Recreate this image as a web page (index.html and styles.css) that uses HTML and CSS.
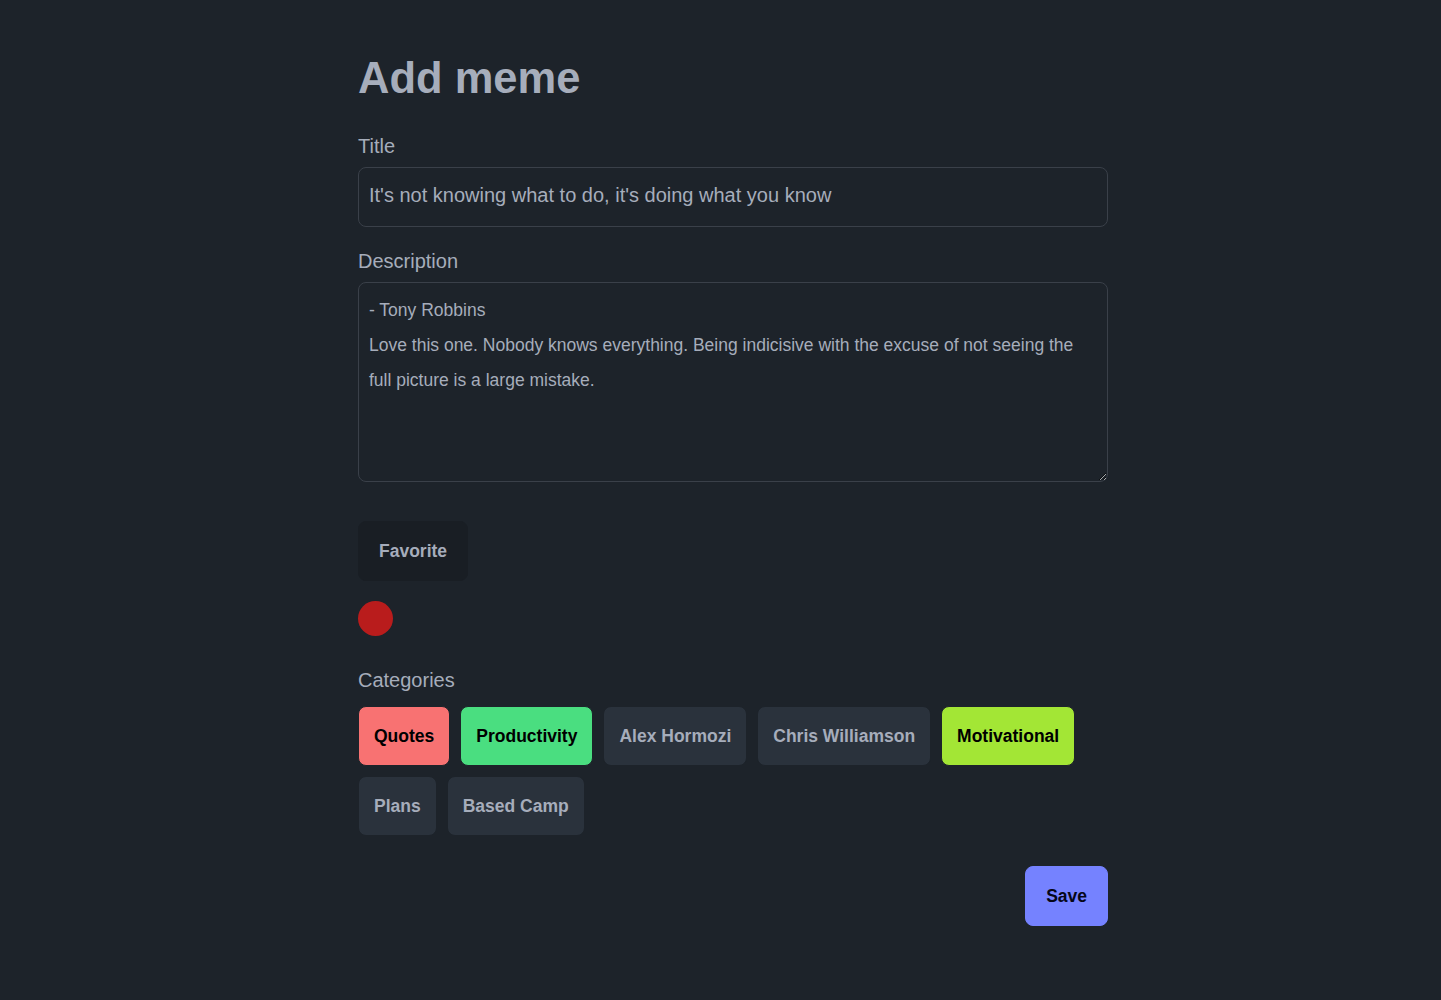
FILE: index.html
```html
<!DOCTYPE html>
<html lang="en">
<head>
<meta charset="utf-8">
<title>Add meme</title>
<link rel="stylesheet" href="styles.css">
</head>
<body>
<main class="page">
  <form class="form">
    <h1 class="heading">Add meme</h1>

    <label class="label label-title" for="title">Title</label>
    <input id="title" class="input" type="text" value="It's not knowing what to do, it's doing what you know">

    <label class="label label-desc" for="desc">Description</label>
    <textarea id="desc" class="textarea">- Tony Robbins
Love this one. Nobody knows everything. Being indicisive with the excuse of not seeing the full picture is a large mistake.</textarea>

    <button type="button" class="btn btn-fav">Favorite</button>
    <span class="dot"></span>

    <div class="label label-cat">Categories</div>
    <div class="cats">
      <button type="button" class="btn cat cat-red">Quotes</button>
      <button type="button" class="btn cat cat-green">Productivity</button>
      <button type="button" class="btn cat">Alex Hormozi</button>
      <button type="button" class="btn cat">Chris Williamson</button>
      <button type="button" class="btn cat cat-lime">Motivational</button>
      <button type="button" class="btn cat">Plans</button>
      <button type="button" class="btn cat">Based Camp</button>
    </div>

    <div class="actions">
      <button type="button" class="btn btn-save">Save</button>
    </div>
  </form>
</main>
</body>
</html>
```

FILE: styles.css
```css
* { box-sizing: border-box; }

html, body {
  margin: 0;
  padding: 0;
  background: #1d232a;
  color: #a6adbb;
  font-family: "Liberation Sans", Arial, sans-serif;
}

.page {
  width: 775px;
  margin: 0 auto;
  padding: 54px 0 40px 25px;
}

.form {
  width: 750px;
  display: flex;
  flex-direction: column;
  align-items: flex-start;
}

.heading {
  margin: 0;
  font-size: 43.5px;
  line-height: 48px;
  font-weight: 700;
  color: #a6adbb;
}

.label {
  display: block;
  font-size: 20px;
  line-height: 24px;
  color: #a6adbb;
}

.label-title { margin-top: 32px; }
.label-desc { margin-top: 22px; }
.label-cat { margin-top: 32px; }

.input,
.textarea {
  width: 100%;
  margin-top: 9px;
  background: #1d232a;
  color: #a6adbb;
  border: 1px solid #3a4049;
  border-radius: 8px;
  font-family: "Liberation Sans", Arial, sans-serif;
  outline: none;
}

.input {
  height: 60px;
  padding: 0 10px 4px;
  font-size: 20px;
}

.textarea {
  height: 200px;
  padding: 10px;
  font-size: 17.5px;
  line-height: 35px;
}

.btn {
  height: 60px;
  border: 1px solid transparent;
  border-radius: 8px;
  font-family: "Liberation Sans", Arial, sans-serif;
  font-size: 17.5px;
  font-weight: 700;
  cursor: pointer;
}

.btn-fav {
  margin-top: 39px;
  padding: 0 20px;
  background: #191e24;
  border-color: #191e24;
  color: #a6adbb;
}

.dot {
  display: block;
  width: 35px;
  height: 35px;
  margin-top: 20px;
  border-radius: 50%;
  background: #b91c1c;
}

.cats {
  margin-top: 14px;
  display: flex;
  flex-wrap: wrap;
  gap: 10px;
}

.cat {
  padding: 0 15px;
  background: #2a323c;
  border-color: #1d232a;
  color: #a6adbb;
}

.cat-red { background: #f87272; color: #000; }
.cat-green { background: #4ade80; color: #000; }
.cat-lime { background: #a3e635; color: #000; }

.actions {
  width: 100%;
  margin-top: 30px;
  display: flex;
  justify-content: flex-end;
}

.btn-save {
  padding: 0 20px;
  background: #7582ff;
  border-color: #7582ff;
  color: #050617;
}
```
